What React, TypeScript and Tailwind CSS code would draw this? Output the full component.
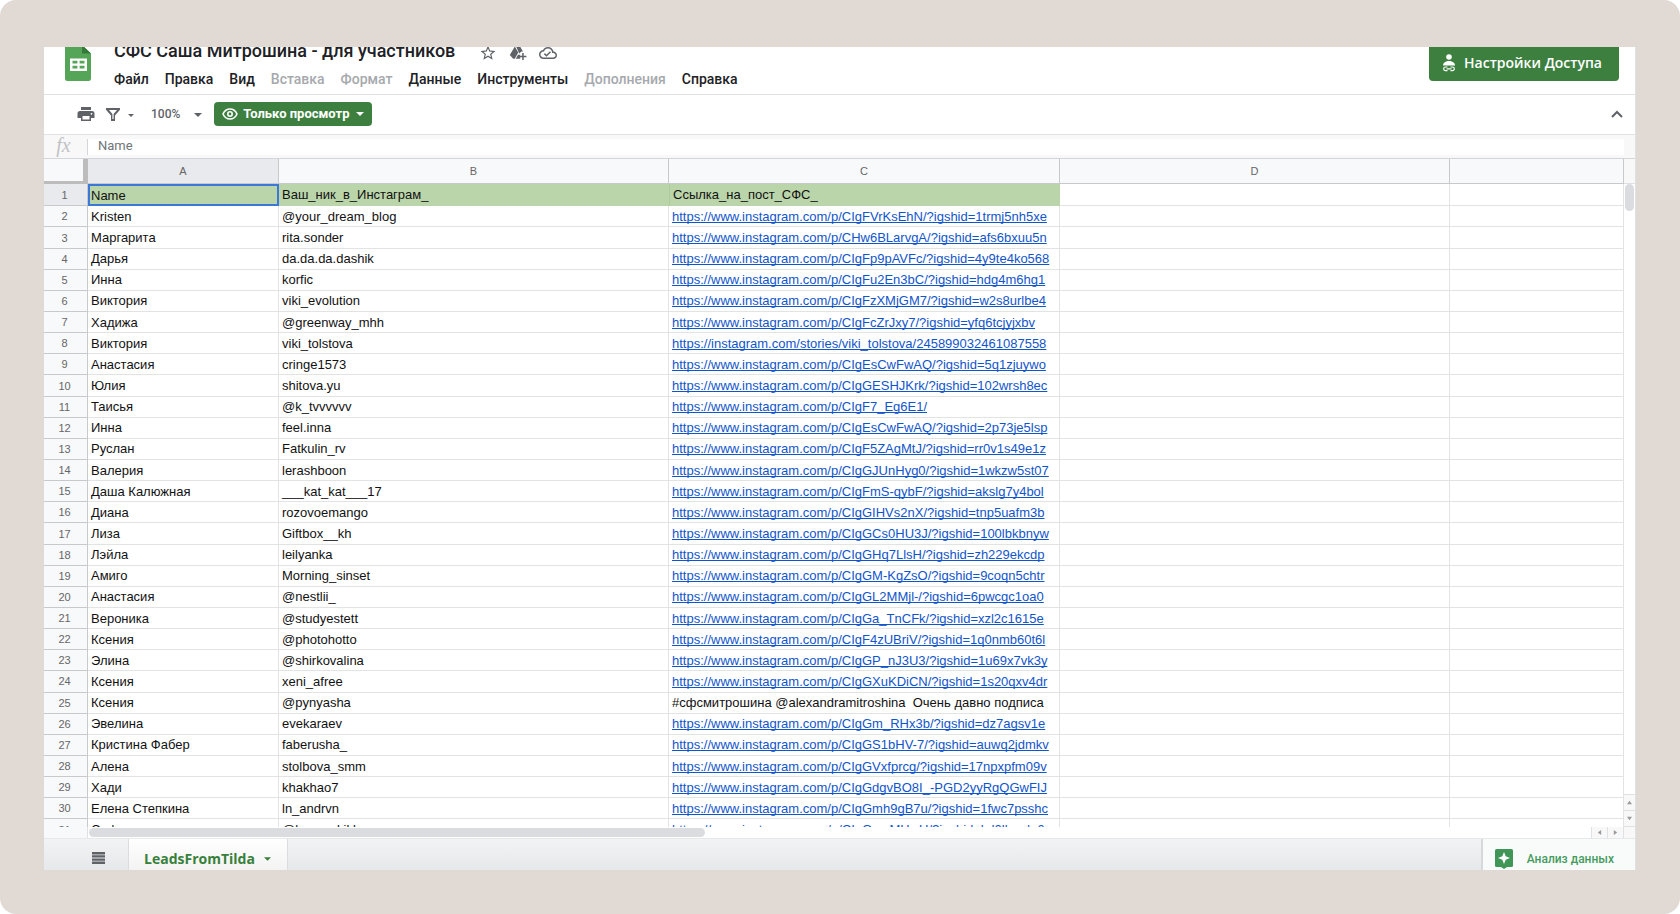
import React from "react";

interface Lead {
  name: string;
  nick: string;
  post: string;
}

const link = "https://www.instagram.com/p/";

const leads: Lead[] = [
  { name: "Kristen", nick: "@your_dream_blog", post: link + "CIgFVrKsEhN/?igshid=1trmj5nh5xe" },
  { name: "Маргарита", nick: "rita.sonder", post: link + "CHw6BLarvgA/?igshid=afs6bxuu5n" },
  { name: "Дарья", nick: "da.da.da.dashik", post: link + "CIgFp9pAVFc/?igshid=4y9te4ko568" },
  { name: "Инна", nick: "korfic", post: link + "CIgFu2En3bC/?igshid=hdg4m6hg1" },
  { name: "Виктория", nick: "viki_evolution", post: link + "CIgFzXMjGM7/?igshid=w2s8urlbe4" },
  { name: "Хадижа", nick: "@greenway_mhh", post: link + "CIgFcZrJxy7/?igshid=yfq6tcjyjxbv" },
  { name: "Виктория", nick: "viki_tolstova", post: "https://instagram.com/stories/viki_tolstova/245899032461087558" },
  { name: "Анастасия", nick: "cringe1573", post: link + "CIgEsCwFwAQ/?igshid=5q1zjuywo" },
  { name: "Юлия", nick: "shitova.yu", post: link + "CIgGESHJKrk/?igshid=102wrsh8ec" },
  { name: "Таисья", nick: "@k_tvvvvvv", post: link + "CIgF7_Eg6E1/" },
  { name: "Инна", nick: "feel.inna", post: link + "CIgEsCwFwAQ/?igshid=2p73je5lsp" },
  { name: "Руслан", nick: "Fatkulin_rv", post: link + "CIgF5ZAgMtJ/?igshid=rr0v1s49e1z" },
  { name: "Валерия", nick: "lerashboon", post: link + "CIgGJUnHyg0/?igshid=1wkzw5st07" },
  { name: "Даша Калюжная", nick: "___kat_kat___17", post: link + "CIgFmS-qybF/?igshid=akslg7y4bol" },
  { name: "Диана", nick: "rozovoemango", post: link + "CIgGIHVs2nX/?igshid=tnp5uafm3b" },
  { name: "Лиза", nick: "Giftbox__kh", post: link + "CIgGCs0HU3J/?igshid=100lbkbnyw" },
  { name: "Лэйла", nick: "leilyanka", post: link + "CIgGHq7LlsH/?igshid=zh229ekcdp" },
  { name: "Амиго", nick: "Morning_sinset", post: link + "CIgGM-KgZsO/?igshid=9coqn5chtr" },
  { name: "Анастасия", nick: "@nestlii_", post: link + "CIgGL2MMjl-/?igshid=6pwcgc1oa0" },
  { name: "Вероника", nick: "@studyestett", post: link + "CIgGa_TnCFk/?igshid=xzl2c1615e" },
  { name: "Ксения", nick: "@photohotto", post: link + "CIgF4zUBriV/?igshid=1q0nmb60t6l" },
  { name: "Элина", nick: "@shirkovalina", post: link + "CIgGP_nJ3U3/?igshid=1u69x7vk3y" },
  { name: "Ксения", nick: "xeni_afree", post: link + "CIgGXuKDiCN/?igshid=1s20qxv4dr" },
  { name: "Ксения", nick: "@pynyasha", post: "#сфсмитрошина @alexandramitroshina  Очень давно подписа" },
  { name: "Эвелина", nick: "evekaraev", post: link + "CIgGm_RHx3b/?igshid=dz7agsv1e" },
  { name: "Кристина Фабер", nick: "faberusha_", post: link + "CIgGS1bHV-7/?igshid=auwq2jdmkv" },
  { name: "Алена", nick: "stolbova_smm", post: link + "CIgGVxfprcg/?igshid=17npxpfm09v" },
  { name: "Хади", nick: "khakhao7", post: link + "CIgGdgvBO8I_-PGD2yyRgQGwFIJ" },
  { name: "Елена Степкина", nick: "ln_andrvn", post: link + "CIgGmh9gB7u/?igshid=1fwc7psshc" },
  { name: "Софья", nick: "@havanskikh", post: link + "CIgGmcMHwU/?igshid=kd0lbmdg6" },
];

const menu = [
  { label: "Файл" },
  { label: "Правка" },
  { label: "Вид" },
  { label: "Вставка", disabled: true },
  { label: "Формат", disabled: true },
  { label: "Данные" },
  { label: "Инструменты" },
  { label: "Дополнения", disabled: true },
  { label: "Справка" },
];

function Caret({ className }: { className?: string }) {
  return (
    <svg viewBox="0 0 8 4" className={className} fill="currentColor" aria-hidden="true">
      <path d="M0 0h8L4 4z" />
    </svg>
  );
}

function SheetsLogo() {
  return (
    <svg viewBox="0 0 26 36" className="h-9 w-[26px] shrink-0" aria-hidden="true">
      <path d="M2.500 0H17L26 8.500V33.500a2.500 2.500 0 0 1-2.500 2.500h-21A2.500 2.500 0 0 1 0 33.500v-31A2.500 2.500 0 0 1 2.500 0z" fill="#54a557" />
      <path d="M17 0L26 8.500H17z" fill="#357a38" />
      <path d="M5 13.500h17v12.500H5zM7.500 15.800v2.800h4.900v-2.800zm7.100 0v2.800h4.900v-2.800zm-7.100 5v2.800h4.900v-2.800zm7.100 0v2.800h4.900v-2.800z" fill="#fff" fillRule="evenodd" />
    </svg>
  );
}

function Header() {
  return (
    <header className="-mt-2 flex h-14 shrink-0 justify-between border-b border-[#dfe1e5] pr-4 pl-[21px]">
      <div className="flex gap-[23px]">
        <div className="pt-1.5">
          <SheetsLogo />
        </div>
        <div>
          <div className="flex h-6 items-center gap-6 text-[#5f6368]">
            <h1 className="text-lg leading-6 font-medium whitespace-nowrap text-[#202124]">
              СФС Саша Митрошина - для участников
            </h1>
            <div className="flex items-center gap-3 pt-1">
              <button type="button" aria-label="Пометить">
                <svg viewBox="0 0 24 24" className="size-[18px]" fill="currentColor">
                  <path d="M22 9.240l-7.190-.62L12 2 9.190 8.630 2 9.240l5.460 4.730L5.820 21 12 17.270 18.180 21l-1.630-7.030L22 9.240zM12 15.400l-3.760 2.270 1-4.280-3.320-2.880 4.380-.38L12 6.100l1.710 4.040 4.380.38-3.320 2.880 1 4.280L12 15.400z" />
                </svg>
              </button>
              <button type="button" aria-label="Добавить ярлык на Диск">
                <svg viewBox="0 0 18 16" className="h-4 w-[18px]" fill="currentColor">
                  <path d="M5.800 1.500L9.300 7.600 5.800 13.800H4.200L.8 10.100z" />
                  <path d="M6.900 1h3.900l3.200 5.500h-1.600l-2.200 2z" />
                  <path d="M6.800 13.800L9 9.800h2.200v4z" />
                  <path d="M13.200 8h1.500v2.700h2.700v1.500h-2.700v2.700h-1.500v-2.700h-2.700v-1.500h2.700z" />
                </svg>
              </button>
              <button type="button" aria-label="Сохранено на Диске">
                <svg viewBox="0 0 24 24" className="size-[18px]" fill="currentColor">
                  <path d="M19.350 10.040C18.670 6.590 15.640 4 12 4 9.110 4 6.600 5.640 5.350 8.040 2.340 8.360 0 10.910 0 14c0 3.310 2.690 6 6 6h13c2.760 0 5-2.240 5-5 0-2.640-2.050-4.780-4.650-4.960zM19 18H6c-2.210 0-4-1.790-4-4s1.790-4 4-4h.71C7.370 7.690 9.480 6 12 6c3.040 0 5.500 2.460 5.500 5.500v.5H19c1.660 0 3 1.340 3 3s-1.340 3-3 3zm-9-3.820l-2.090-2.090L6.500 13.500 10 17l6.010-6.010-1.410-1.410z" />
                </svg>
              </button>
            </div>
          </div>
          <nav className="flex h-8 items-center gap-4 text-sm font-medium">
            {menu.map((item) => (
              <button
                key={item.label}
                type="button"
                disabled={item.disabled}
                className="text-[#202124] disabled:text-[#a6a9ad]"
              >
                {item.label}
              </button>
            ))}
          </nav>
        </div>
      </div>
      <button
        type="button"
        className="flex h-[42px] items-center gap-2 rounded bg-[#3c7f3f] pt-1.5 pr-[17px] pl-[13px] font-['Open_Sans',sans-serif] text-sm font-semibold whitespace-nowrap text-white"
      >
        <svg viewBox="0 0 14 18" className="h-[18px] w-3.5" fill="currentColor" aria-hidden="true">
          <circle cx="7" cy="3" r="2.800" />
          <path d="M1 11.500C1 8.500 4 7 7 7s6 1.500 6 4.500z" />
          <path d="M5.500 13H3.500a1.800 1.800 0 0 0 0 3.600h2M8.500 13h2a1.800 1.800 0 0 1 0 3.600h-2M4.500 14.800h5" fill="none" stroke="currentColor" strokeWidth="1.200" />
        </svg>
        Настройки Доступа
      </button>
    </header>
  );
}

function Toolbar() {
  return (
    <div className="flex h-10 shrink-0 items-center border-b border-[#dfe1e5] pr-3 pb-px pl-[33px] text-[#5f6368]">
      <button type="button" aria-label="Печать" className="mr-[11px]">
        <svg viewBox="0 0 18 16" className="h-4 w-[18px]" fill="currentColor">
          <path d="M4 1h10v3H4z" />
          <path d="M3 5h12a2.500 2.500 0 0 1 2.500 2.500V12H14v3H4v-3H.5V7.500A2.500 2.500 0 0 1 3 5zm2.500 5v3.500h7V10zM14.500 7a.8.8 0 1 0 .01 0z" fillRule="evenodd" />
        </svg>
      </button>
      <button type="button" aria-label="Фильтр" className="flex items-center gap-2">
        <svg viewBox="0 0 14 13" className="h-[13px] w-3.5" fill="currentColor">
          <path d="M0 0h14v1.800L9 7.500V13H5V7.500L0 1.800zm3 1.900l3.400 4v5h1.200v-5l3.400-4z" fillRule="evenodd" />
        </svg>
        <Caret className="mt-0.5 h-[3px] w-1.5" />
      </button>
      <button type="button" className="ml-[17px] flex items-center gap-3.5 text-xs font-medium">
        100%
        <Caret className="mt-0.5 h-1 w-2" />
      </button>
      <button
        type="button"
        className="ml-3 flex h-6 items-center gap-[5px] rounded bg-[#3c7f3f] px-2 text-[13px] font-bold whitespace-nowrap text-white"
      >
        <svg viewBox="0 0 16 12" className="h-3 w-4" fill="none" stroke="currentColor" strokeWidth="1.600" aria-hidden="true">
          <path d="M1 6C2.500 2.700 5 1 8 1s5.500 1.700 7 5c-1.500 3.300-4 5-7 5S2.500 9.300 1 6z" />
          <circle cx="8" cy="6" r="2.200" />
        </svg>
        Только просмотр
        <Caret className="ml-0.5 h-1 w-2" />
      </button>
      <button type="button" aria-label="Скрыть меню" className="ml-auto">
        <svg viewBox="0 0 12 8" className="h-2 w-3" fill="none" stroke="currentColor" strokeWidth="2">
          <path d="M1 7l5-5 5 5" />
        </svg>
      </button>
    </div>
  );
}

function FormulaBar() {
  return (
    <div className="flex h-6 shrink-0 items-center border-b border-[#d3d5d8] bg-[#f8f8f8] pr-[11px]">
      <label
        htmlFor="formula"
        className="flex h-4 w-11 items-center justify-center border-r border-[#d3d5d8] pr-1 pb-1 font-['Liberation_Serif',serif] text-xl text-[#c0c2c5] italic"
      >
        fx
      </label>
      <input id="formula" readOnly value="Name" className="h-4 flex-1 bg-white pb-0.5 pl-[10px] text-[13px] text-[#70757a] outline-none" />
    </div>
  );
}

function Grid() {
  return (
    <div className="min-h-0 flex-1 overflow-hidden">
      <table className="h-[682px] w-full table-fixed border-separate border-spacing-0 font-['Liberation_Sans',Arial,sans-serif] text-[13px] leading-4 text-[#111]">
        <colgroup>
          <col className="w-11" />
          <col className="w-[191px]" />
          <col className="w-[390px]" />
          <col className="w-[391px]" />
          <col className="w-[390px]" />
          <col />
        </colgroup>
        <thead>
          <tr className="h-[25px] bg-[#f8f9fb] text-[11px] text-[#666]">
            <td className="border-r-[5px] border-b-[3px] border-[#bcbcbc]" />
            {["A", "B", "C", "D", ""].map((letter) => (
              <th
                key={letter}
                scope="col"
                className="border-r border-b border-[#c8c9cb] p-0 font-normal first-of-type:bg-[#e8eaed]"
              >
                {letter}
              </th>
            ))}
          </tr>
        </thead>
        <tbody>
          <tr className="bg-[#bbd5ab]">
            <RowNumber value={1} active />
            <td className="border-2 border-[#3c78d8] p-0 pt-px pl-px leading-[14px]">Name</td>
            <td className="border-b border-[#bbd5ab] p-0 pt-px pl-[3px]">Ваш_ник_в_Инстаграм_</td>
            <td className="border-b border-l border-b-[#bbd5ab] border-l-[#aecb9c] p-0 pt-px pl-[3px]">Ссылка_на_пост_СФС_</td>
            <td className="border-r border-b border-[#e2e3e3] bg-white p-0" />
            <td className="border-r border-b border-[#e2e3e3] bg-white p-0" />
          </tr>
          {leads.map((lead, i) => (
            <tr key={i}>
              <RowNumber value={i + 2} />
              <td className="overflow-hidden border-r border-b border-[#e2e3e3] p-0 pt-px pl-[3px] whitespace-pre">{lead.name}</td>
              <td className="overflow-hidden border-r border-b border-[#e2e3e3] p-0 pt-px pl-[3px] whitespace-pre">{lead.nick}</td>
              <td className="overflow-hidden border-r border-b border-[#e2e3e3] p-0 pt-px pl-[3px] whitespace-pre">
                {lead.post.startsWith("https") ? (
                  <a href={lead.post} className="text-[#1155cc] underline underline-offset-1 [text-decoration-skip-ink:none]">
                    {lead.post}
                  </a>
                ) : (
                  lead.post
                )}
              </td>
              <td className="border-r border-b border-[#e2e3e3] p-0" />
              <td className="border-r border-b border-[#e2e3e3] p-0" />
            </tr>
          ))}
        </tbody>
      </table>
    </div>
  );
}

function RowNumber({ value, active }: { value: number; active?: boolean }) {
  return (
    <th
      scope="row"
      className={
        "border-r border-b border-[#c8c9cb] p-0 pr-0.5 text-[11px] font-normal text-[#666] " +
        (active ? "bg-[#e8eaed]" : "bg-[#f8f9fb]")
      }
    >
      {value}
    </th>
  );
}

function ScrollArrow({ className, d, label }: { className: string; d: string; label: string }) {
  return (
    <button type="button" aria-label={label} className={"flex items-center justify-center border-[#dfe1e5] bg-[#f8f8f8] text-[#999] " + className}>
      <svg viewBox="0 0 6 6" className="size-[5px]" fill="currentColor">
        <path d={d} />
      </svg>
    </button>
  );
}

function Footer() {
  return (
    <footer className="flex h-8 shrink-0 border-t border-[#e6e8ea] bg-linear-to-b from-[#f1f3f4] to-[#e6e8eb]">
      <button type="button" aria-label="Все листы" className="flex w-[84px] items-center justify-end pt-1.5 pr-[23px] text-[#5f6368]">
        <svg viewBox="0 0 13 12" className="h-3 w-[13px]" stroke="currentColor" strokeWidth="2.400">
          <path d="M0 1.200h13M0 4.400h13M0 7.600h13M0 10.800h13" />
        </svg>
      </button>
      <button
        type="button"
        className="flex items-center gap-[9px] border-x border-[#dadce0] bg-linear-to-b from-white to-[#f3f3f3] pt-2 pr-4 pl-[15px] font-['Open_Sans',sans-serif] text-sm font-bold text-[#37803b]"
      >
        LeadsFromTilda
        <Caret className="h-1 w-[7px]" />
      </button>
      <button
        type="button"
        className="ml-auto flex items-center gap-3.5 border-l-2 border-[#d6d8da] bg-[#f9fbfa] pt-2 pr-[21px] pl-3 text-xs font-medium text-[#459c60]"
      >
        <svg viewBox="0 0 18 20" className="h-5 w-[18px]" aria-hidden="true">
          <path d="M1.500 0h15A1.500 1.500 0 0 1 18 1.500v15a1.500 1.500 0 0 1-1.500 1.500H12l-3 2-3-2H1.500A1.500 1.500 0 0 1 0 16.500v-15A1.500 1.500 0 0 1 1.500 0z" fill="#3f9657" />
          <path d="M9 3l1.700 4.300L15 9l-4.300 1.700L9 15l-1.700-4.300L3 9l4.300-1.700z" fill="#fff" />
        </svg>
        Анализ данных
      </button>
    </footer>
  );
}

export function App() {
  return (
    <div className="flex h-screen flex-col rounded-2xl bg-[#e1d9d4] px-11 pt-[47px] pb-11 font-['Roboto',sans-serif]">
      <div className="flex min-h-0 flex-1 flex-col overflow-hidden border-r border-[#dfe1e5] bg-white">
        <Header />
        <Toolbar />
        <FormulaBar />
        <main className="flex min-h-0 flex-1">
          <div className="flex min-w-0 flex-1 flex-col">
            <Grid />
            <div className="flex h-[11px] shrink-0">
              <div className="w-11 border-r border-[#dfe1e5] bg-[#f8f9fa]" />
              <div className="flex flex-1 items-center pl-px">
                <div className="h-[9px] w-[41%] rounded-full bg-[#dadce0]" />
              </div>
              <ScrollArrow label="Влево" className="w-4 border-l" d="M5 0v6L1 3z" />
              <ScrollArrow label="Вправо" className="w-[17px] border-x" d="M1 0v6l4-3z" />
            </div>
          </div>
          <div className="flex w-[11px] shrink-0 flex-col">
            <div className="h-[25px] border-b border-[#dfe1e5] bg-[#f8f8f8]" />
            <div className="mx-auto h-[27px] w-[9px] rounded-full bg-[#dadce0]" />
            <ScrollArrow label="Вверх" className="mt-auto h-4 border-t" d="M0 5h6L3 1z" />
            <ScrollArrow label="Вниз" className="h-[17px] border-y" d="M0 1h6L3 5z" />
            <div className="h-[11px] bg-[#f8f8f8]" />
          </div>
        </main>
        <Footer />
      </div>
    </div>
  );
}

export default App;
